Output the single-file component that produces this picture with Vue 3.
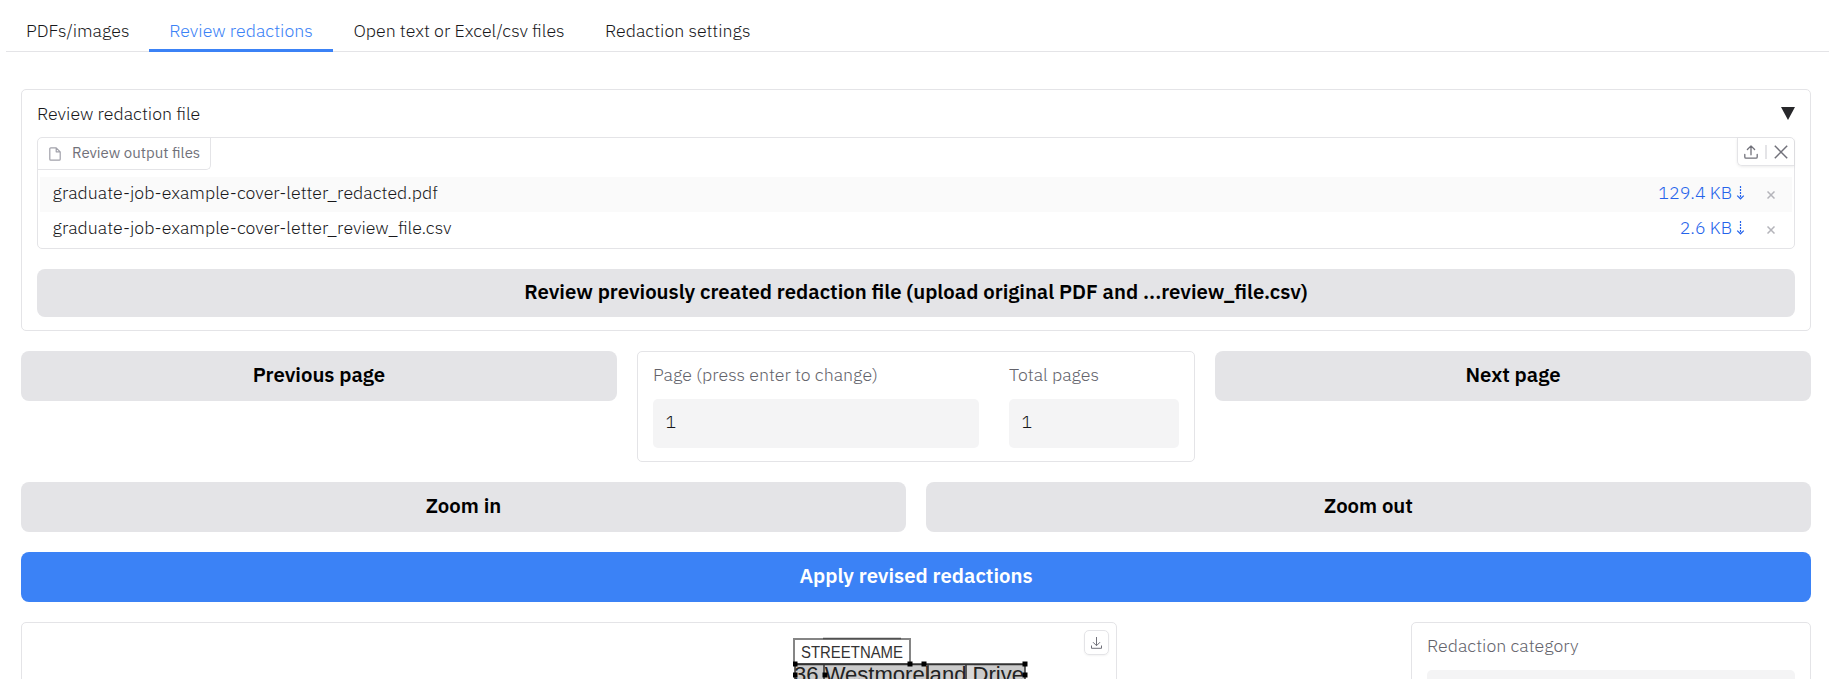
<script setup>
import { ref } from 'vue'

const tabs = ['PDFs/images', 'Review redactions', 'Open text or Excel/csv files', 'Redaction settings']
const active = ref(1)
const files = [
  { name: 'graduate-job-example-cover-letter_redacted.pdf', size: '129.4 KB' },
  { name: 'graduate-job-example-cover-letter_review_file.csv', size: '2.6 KB' },
]
const handles = [[795, 664], [910, 664], [924, 664], [1025, 664], [795, 675], [825, 675], [1025, 675]]
</script>

<template>
  <div class="page">
    <nav class="tabs">
      <button v-for="(t, i) in tabs" :key="t" class="tab" :class="{ active: i === active }" @click="active = i">{{ t }}</button>
    </nav>

    <main class="content">
      <section class="panel accordion">
        <header class="accordion-head">
          <span>Review redaction file</span>
          <svg class="caret" width="14" height="13" viewBox="0 0 14 13"><path d="M0 0H14L7 13Z" fill="#27272a" /></svg>
        </header>

        <div class="files">
          <div class="files-top">
            <div class="files-label">
              <svg width="12" height="14" viewBox="0 0 12 14" fill="none" stroke="#a1a1aa" stroke-width="1.2" stroke-linejoin="round">
                <path d="M7.2 .8H1.8Q.8 .8 .8 1.8V12.2Q.8 13.2 1.8 13.2H10.2Q11.2 13.2 11.2 12.2V4.8ZM7.2 .8V4.8H11.2" />
              </svg>
              <span>Review output files</span>
            </div>
            <div class="files-tools">
              <svg width="14" height="14" viewBox="0 0 14 14" fill="none" stroke="#71717a" stroke-width="1.3" stroke-linecap="round" stroke-linejoin="round">
                <path d="M.8 9.4V12Q.8 13.2 2 13.2H12Q13.2 13.2 13.2 12V9.4M7 9.8V1M3.4 4.5L7 .9L10.6 4.5" />
              </svg>
              <i class="divider"></i>
              <svg width="14" height="14" viewBox="0 0 14 14" stroke="#71717a" stroke-width="1.5">
                <path d="M.8 .8L13.2 13.2M13.2 .8L.8 13.2" />
              </svg>
            </div>
          </div>
          <div class="rows">
            <div v-for="f in files" :key="f.name" class="row">
              <span class="name">{{ f.name }}</span>
              <a class="size">{{ f.size }}</a>
              <svg class="down" width="9" height="14" viewBox="0 0 9 14" fill="none" stroke="#2563eb" stroke-width="1.2">
                <path d="M4.5 0V12" stroke-dasharray="2 1" /><path d="M1.2 9.6L4.5 12.8L7.8 9.6" />
              </svg>
              <svg class="remove" width="8" height="8" viewBox="0 0 8 8" stroke="#b4b4ba" stroke-width="1.5">
                <path d="M.5 .5L7.5 7.5M7.5 .5L.5 7.5" />
              </svg>
            </div>
          </div>
        </div>

        <button class="btn slim">Review previously created redaction file (upload original PDF and ...review_file.csv)</button>
      </section>

      <div class="pager">
        <button class="btn">Previous page</button>
        <div class="panel page-box">
          <label class="field">
            <span>Page (press enter to change)</span>
            <div class="input">1</div>
          </label>
          <label class="field">
            <span>Total pages</span>
            <div class="input">1</div>
          </label>
        </div>
        <button class="btn">Next page</button>
      </div>

      <div class="zoom">
        <button class="btn">Zoom in</button>
        <button class="btn">Zoom out</button>
      </div>

      <button class="btn primary">Apply revised redactions</button>

      <div class="bottom">
        <div class="panel viewer">
          <svg class="canvas" viewBox="793 637 236 60" width="236" height="60">
            <rect x="795" y="664" width="230" height="33" fill="#cbcbcb" />
            <rect x="967" y="665" width="7" height="32" fill="#d9d9d9" />
            <text x="794" y="681.5" font-size="22.5" textLength="230" lengthAdjust="spacingAndGlyphs" fill="#222">36 Westmoreland Drive</text>
            <rect x="794" y="639" width="116" height="25" fill="#fff" stroke="#858585" stroke-width="2" />
            <path d="M823 638.5H901" stroke="#505050" stroke-width="1.5" />
            <text x="801" y="658" font-size="16" textLength="102" lengthAdjust="spacingAndGlyphs" fill="#333">STREETNAME</text>
            <path d="M795 664.2H1025" stroke="#333" stroke-width="2" />
            <path d="M795 664V697M824 664V697M928 664V697M966 664V697M1025 664V697" stroke="#333" stroke-width="1.5" />
            <rect v-for="([x, y], i) in handles" :key="i" :x="x - 2.5" :y="y - 2.5" width="5" height="5" fill="#000" />
          </svg>
          <div class="download">
            <svg width="11" height="12" viewBox="0 0 11 12" fill="none" stroke="#71717a" stroke-width="1">
              <path d="M.5 8.5V11.3H10.5V8.5M5.5 0V8.6M2 5.2L5.5 8.7L9 5.2" />
            </svg>
          </div>
        </div>
        <div class="panel category">
          <span>Redaction category</span>
          <div class="input"></div>
        </div>
      </div>
    </main>
  </div>
</template>

<style>
html, body { overflow: hidden; background: #fff; }
</style>

<style scoped>
.page {
  height: 679px;
  overflow: hidden;
  font-family: "IBM Plex Sans", "Noto Sans", sans-serif;
  font-size: 17.8px;
  font-weight: 300;
  line-height: 24px;
  color: #18181b;
}
.page * { box-sizing: border-box; }
button { font: inherit; border: 0; margin: 0; color: inherit; cursor: pointer; }
.tabs { display: flex; height: 52px; margin: 0 6px; box-shadow: inset 0 -1px #e4e4e7; }
.tab { padding: 12px 20px 0; background: none; border-bottom: 3px solid transparent; white-space: nowrap; }
.tab:first-child { width: 143px; }
.tab:nth-child(2) { width: 184px; }
.tab:nth-child(3) { width: 252px; }
.tab.active { color: #3b82f6; border-color: #3b82f6; }
.content { display: flex; flex-direction: column; gap: 20px; padding: 37px 24px 0 21px; }
.panel { border: 1px solid #e4e4e7; border-radius: 5px; background: #fff; }
.accordion { height: 242px; padding: 12px 15px 0; }
.accordion-head { display: flex; justify-content: space-between; height: 35px; }
.caret { margin-top: 5px; }
.files { height: 112px; margin-bottom: 20px; border: 1px solid #e4e4e7; border-radius: 5px; }
.files-top { display: flex; justify-content: space-between; height: 39px; }
.files-label { display: flex; align-items: center; gap: 11px; width: 173px; height: 32px; padding-left: 11px; border: solid #e4e4e7; border-width: 0 1px 1px 0; border-radius: 0 0 5px 0; font-size: 15px; font-weight: 400; color: #71717a; white-space: nowrap; }
.files-label span { padding-bottom: 2px; }
.files-tools { display: flex; align-items: center; justify-content: space-between; width: 57px; height: 28px; padding: 0 6px; border: solid #e4e4e7; border-width: 0 0 1px 1px; border-radius: 0 0 0 5px; box-shadow: 0 1px 3px rgba(0, 0, 0, .08); }
.divider { width: 2px; height: 14px; background: #e4e4e7; }
.rows { padding: 0 2px; }
.row { display: flex; align-items: center; height: 35px; padding: 0 17px 0 12.5px; }
.row:first-child { background: #fafafa; }
.name { flex: 1; padding-bottom: 4px; }
.size { padding-bottom: 4px; color: #2563eb; }
.down { margin: 0 22px 3px 4px; }
.btn { display: flex; align-items: center; justify-content: center; height: 50px; width: 100%; padding: 0 0 2px; border-radius: 8px; background: #e4e4e7; color: #000; font-size: 20.35px; font-weight: 600; white-space: nowrap; }
.btn.slim { height: 48px; }
.btn.primary { background: #3b82f6; color: #fff; }
.pager { display: grid; grid-template-columns: 596px 558px 596px; gap: 20px; }
.page-box { display: grid; grid-template-columns: 326px 170px; column-gap: 30px; height: 111px; padding: 11px 15px; color: #63636b; }
.field { display: block; }
.field > span { display: block; height: 36px; }
.input { height: 49px; padding: 11px 12.5px; border-radius: 5px; background: #f4f4f5; color: #18181b; }
.zoom { display: grid; grid-template-columns: 1fr 1fr; gap: 20px; }
.bottom { display: flex; justify-content: space-between; }
.viewer { display: flex; justify-content: space-between; width: 1096px; height: 120px; padding: 7px 7px 0 771px; }
.canvas { margin-top: 7px; font-family: "Liberation Sans", Arial, sans-serif; font-weight: 400; }
.download { display: flex; align-items: center; justify-content: center; width: 25px; height: 25px; border: 1px solid #e4e4e7; border-radius: 5px; box-shadow: 0 1px 2px rgba(0, 0, 0, .05); }
.category { width: 400px; height: 120px; padding: 11px 15px; color: #63636b; }
.category > span { display: block; height: 36px; }
</style>
